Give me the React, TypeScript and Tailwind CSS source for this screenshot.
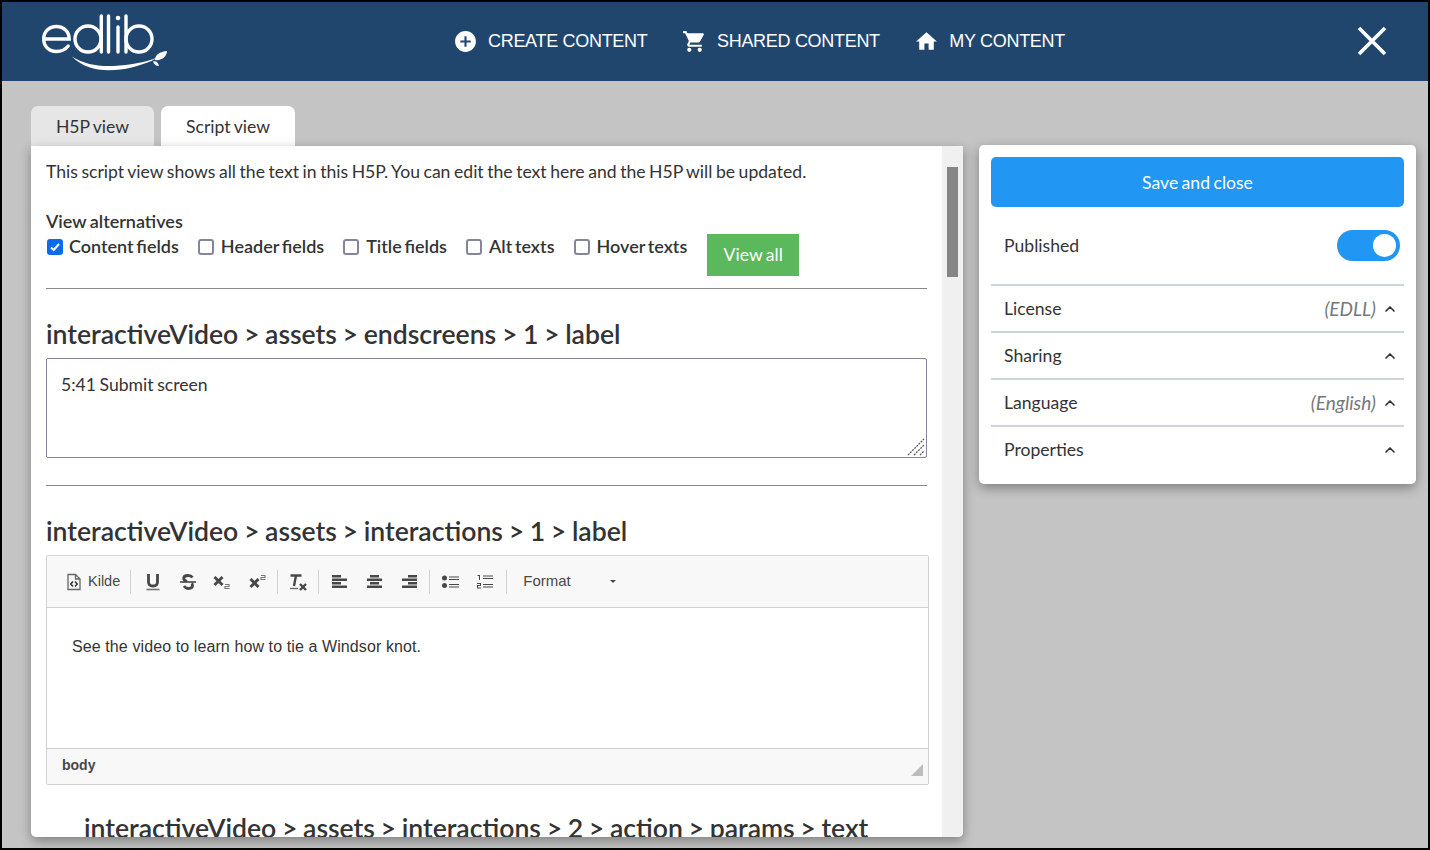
import { ChevronUp } from "lucide-react";
import { MdAddCircle, MdHome, MdShoppingCart } from "react-icons/md";

const filters = [
  { label: "Content fields", checked: true },
  { label: "Header fields", checked: false },
  { label: "Title fields", checked: false },
  { label: "Alt texts", checked: false },
  { label: "Hover texts", checked: false },
];

const accordions = [
  { label: "License", value: "(EDLL)" },
  { label: "Sharing" },
  { label: "Language", value: "(English)" },
  { label: "Properties" },
];

const Logo = () => (
  <svg width="128" height="60" viewBox="0 0 128 60" fill="none" stroke="#fff" strokeLinecap="round">
    <path strokeWidth="3.400" d="M2.700 28h25.500c0-7.500-5.500-12.500-12.800-12.500S2.700 20.500 2.700 28 8 40.500 15.400 40.500c5 0 9-2 11.800-5.500" />
    <circle cx="47" cy="28" r="13" strokeWidth="3.400" />
    <path strokeWidth="3.400" d="M60.300 5v36M67.500 5v36M77 16v25M85 5v36" />
    <circle cx="77" cy="7" r="2.300" fill="#fff" stroke="none" />
    <circle cx="98" cy="28" r="13" strokeWidth="3.400" />
    <path fill="#fff" stroke="none" d="M31 45.500c11 7 23 9.500 36 9.500 16 0 31-2.500 44-6.500l.5 1c-13 5.500-28 9.800-44 9.800-14 0-27-4-36.500-13.800z" />
    <path stroke="#fff" strokeWidth=".8" d="M110 49.500 122 44" />
    <path fill="#fff" stroke="none" d="M114 49c0-5 5-8.500 12-9 0 5-5 10-12 9zM112 50.500c3-1 5 .5 6 4.500-3 0-5-1.500-6-4.500z" />
  </svg>
);

const NavItem = ({ icon, label, gap }: { icon: React.ReactNode; label: string; gap: string }) => (
  <a className={`flex items-center ${gap} text-white text-[18px] tracking-[-0.3px] font-['Liberation_Sans',sans-serif]`}>
    {icon}
    <span>{label}</span>
  </a>
);

const Sep = () => <span className="w-px h-[24px] bg-[#d1d1d1] shrink-0" />;

const EditorIcons = {
  source: (
    <svg width="16" height="18" viewBox="0 0 16 18" fill="none" stroke="#666" strokeWidth="1.300">
      <path d="M2 1.500h7.500l4.500 4.500v10.500H2z" />
      <path d="M9.500 1.500V6H14" />
      <path d="M7 8.500 4.800 11 7 13.500M9 8.500l2.200 2.500L9 13.500" stroke="#333" strokeWidth="1.500" />
    </svg>
  ),
  underline: (
    <svg width="16" height="18" viewBox="0 0 16 18" fill="none" stroke="#474747">
      <path strokeWidth="2.800" d="M3.500 1v8c0 2.700 1.800 4 4.500 4s4.500-1.300 4.500-4V1" />
      <path strokeWidth="1.600" d="M1.500 16.500h13" opacity=".75" />
    </svg>
  ),
  strike: (
    <svg width="16" height="16" viewBox="0 0 16 16" fill="none" stroke="#474747">
      <path strokeWidth="2.800" d="M12.500 3.500C11.500 2 10 1.500 8 1.500c-2.500 0-4.300 1.200-4.300 3 0 1.600 1.300 2.300 3.300 3M4 12c1 1.500 2.500 2.500 4.500 2.500 2.500 0 4-1.200 4-3 0-.8-.3-1.500-1-2" />
      <path strokeWidth="1.600" d="M0 8h16" />
    </svg>
  ),
  sub: (
    <svg width="18" height="14" viewBox="0 0 18 14" fill="none" stroke="#474747">
      <path strokeWidth="2.900" d="m1.500 2 8 8M9.500 2l-8 8" />
      <path strokeWidth="1.100" stroke="#777" d="M12 9.500h4v2h-4v2h4.500" />
    </svg>
  ),
  sup: (
    <svg width="18" height="14" viewBox="0 0 18 14" fill="none" stroke="#474747">
      <path strokeWidth="2.900" d="m1.500 4 8 8M9.500 4l-8 8" />
      <path strokeWidth="1.100" stroke="#777" d="M12 .5h4v2h-4v2h4.500" />
    </svg>
  ),
  clear: (
    <svg width="18" height="18" viewBox="0 0 18 18" fill="none" stroke="#474747">
      <path strokeWidth="2.400" d="M1.500 2.500h11M7 2.500 5 13" />
      <path strokeWidth="1.400" d="M1 15.500h8" opacity=".8" />
      <path strokeWidth="2.400" d="m11 11 6 6M17 11l-6 6" />
    </svg>
  ),
};

const AlignIcon = ({ rows }: { rows: [number, number][] }) => (
  <svg width="16" height="14" viewBox="0 0 16 14" fill="#474747">
    {rows.map(([x, w], i) => (
      <rect key={i} x={x} y={i * 3.5} width={w} height="2.500" />
    ))}
  </svg>
);

const BulletIcon = () => (
  <svg width="18" height="14" viewBox="0 0 18 14" fill="#474747">
    <circle cx="2.500" cy="3" r="2.500" />
    <circle cx="2.500" cy="10.500" r="2.500" />
    <path d="M7 1.500h10v1H7zM7 4h10v1H7zM7 9h10v1H7zM7 11.500h10v1H7z" />
  </svg>
);

const NumberIcon = () => (
  <svg width="18" height="16" viewBox="0 0 18 16" fill="#474747">
    <path d="M7 1.500h10v1H7zM7 4h10v1H7zM7 10h10v1H7zM7 12.500h10v1H7z" />
    <path d="M1.500 1H4v5H3V2H1.500zM1 9h4v3H2v1.500h3v1H1V11h3V10H1z" />
  </svg>
);

export default function App() {
  return (
    <div className="w-[1430px] h-[850px] overflow-hidden border-2 border-black bg-[#c4c4c4] flex flex-col font-['Lato',sans-serif] text-[#333]">
      {/* top bar */}
      <header className="h-[79px] shrink-0 bg-[#21466d] flex items-center pl-[39px] pr-[41px]">
        <div className="w-[128px] h-[60px] mt-[-2px]">
          <Logo />
        </div>
        <nav className="ml-[284px] flex items-center gap-[34.5px]">
          <NavItem gap="gap-[10px]" label="CREATE CONTENT" icon={<MdAddCircle className="w-[25px] h-[25px]" />} />
          <NavItem gap="gap-[10px]" label="SHARED CONTENT" icon={<MdShoppingCart className="w-[25px] h-[25px]" />} />
          <NavItem gap="gap-[10px]" label="MY CONTENT" icon={<MdHome className="w-[25px] h-[25px]" />} />
        </nav>
        <button className="ml-auto text-white mt-[-2px]">
          <svg width="30" height="30" viewBox="0 0 30 30" stroke="#fff" strokeWidth="3.600">
            <path d="M2 2l26 26M28 2 2 28" />
          </svg>
        </button>
      </header>

      <div className="flex-1 min-h-0 flex pl-[29px] pr-[12px] pb-[11px] gap-[16px] [word-spacing:-0.06em]">
        {/* left column */}
        <div className="w-[932px] flex flex-col pt-[25px]">
          <div className="flex gap-[7px] h-[40px] shrink-0 text-[17.6px]">
            <div className="w-[123px] pt-[2px] rounded-t-[7px] bg-[#e6e6e6] flex items-center justify-center">H5P view</div>
            <div className="w-[134px] pt-[2px] rounded-t-[7px] bg-white flex items-center justify-center">Script view</div>
          </div>
          <div className="flex-1 min-h-0 flex bg-white rounded-b-[5px] overflow-hidden shadow-[0_4px_12px_rgba(0,0,0,0.35)]">
            <div className="w-[911px] pl-[15px] pr-[15px] overflow-hidden">
              <p className="text-[17.6px] leading-[22px] mt-[15px]">
                This script view shows all the text in this H5P. You can edit the text here and the H5P will be updated.
              </p>
              <div className="text-[18px] leading-[22px] font-semibold mt-[27px]">View alternatives</div>
              <div className="flex items-start mt-[2px] h-[42px]">
                {filters.map((f) => (
                  <label key={f.label} className="flex items-center h-[24px] mr-[19px] text-[18px] font-semibold [word-spacing:-0.1em]">
                    {f.checked ? (
                      <span className="w-[16px] h-[16px] mt-[2px] ml-px mr-[6px] rounded-[3px] bg-[#0b6cf0] flex items-center justify-center">
                        <svg width="12" height="12" viewBox="0 0 12 12" fill="none" stroke="#fff" strokeWidth="2">
                          <path d="m2 6.500 2.700 2.500L10 3" />
                        </svg>
                      </span>
                    ) : (
                      <span className="w-[16px] h-[16px] mt-[2px] mr-[7px] rounded-[3px] border-2 border-[#85859a] bg-white" />
                    )}
                    {f.label}
                  </label>
                ))}
                <button className="w-[92px] h-[42px] ml-px bg-[#5cb85c] text-white text-[17.6px] [word-spacing:-0.06em]">View all</button>
              </div>
              <hr className="border-[#8a8a8a] mt-[12px]" />

              <h2 className="text-[26.6px] leading-[32px] font-semibold mt-[29px]">interactiveVideo &gt; assets &gt; endscreens &gt; 1 &gt; label</h2>
              <div className="relative h-[100px] mt-[8px] border border-[#85859a] rounded-[2px] px-[14px] py-[15px] text-[17.6px] leading-[22px]">
                5:41 Submit screen
                <svg className="absolute right-[1px] bottom-[1px]" width="18" height="18" viewBox="0 0 18 18" stroke="#555" strokeWidth="1.300" strokeDasharray="2 1">
                  <path d="M1 17 17 1M7 17 17 7M13 17l4-4" />
                </svg>
              </div>
              <hr className="border-[#8a8a8a] mt-[27px]" />

              <h2 className="text-[26.6px] leading-[32px] font-semibold mt-[29px]">interactiveVideo &gt; assets &gt; interactions &gt; 1 &gt; label</h2>
              {/* rich text editor */}
              <div className="w-[883px] h-[230px] mt-[8px] border border-[#d1d1d1] rounded-[2px] flex flex-col font-['Liberation_Sans',sans-serif] [word-spacing:normal]">
                <div className="h-[52px] shrink-0 bg-[#f8f8f8] border-b border-[#d1d1d1] flex items-center pl-[19px] text-[#484848]">
                  <span className="flex items-center gap-[6px] mr-[10px] text-[14.500px]">{EditorIcons.source}Kilde</span>
                  <Sep />
                  <span className="ml-[14px] mr-[19px] flex">{EditorIcons.underline}</span>
                  <span className="mr-[17px] flex">{EditorIcons.strike}</span>
                  <span className="mr-[18px] flex">{EditorIcons.sub}</span>
                  <span className="mr-[10px] flex">{EditorIcons.sup}</span>
                  <Sep />
                  <span className="ml-[11px] mr-[11px] flex">{EditorIcons.clear}</span>
                  <Sep />
                  <span className="ml-[13px] mr-[19px] flex"><AlignIcon rows={[[0, 9], [0, 15], [0, 9], [0, 15]]} /></span>
                  <span className="mr-[19px] flex"><AlignIcon rows={[[3, 9], [0, 15], [3, 9], [0, 15]]} /></span>
                  <span className="mr-[11px] flex"><AlignIcon rows={[[6, 9], [0, 15], [6, 9], [0, 15]]} /></span>
                  <Sep />
                  <span className="ml-[12px] mr-[16px] flex"><BulletIcon /></span>
                  <span className="mr-[12px] flex"><NumberIcon /></span>
                  <Sep />
                  <span className="ml-[16px] w-[87px] text-[15px]">Format</span>
                  <span className="border-x-[3px] border-t-[3px] border-x-transparent border-t-[#484848]" />
                </div>
                <div className="flex-1 px-[25px] pt-[29px] text-[16px] leading-[20px] text-[#333] tracking-[0.1px]">
                  See the video to learn how to tie a Windsor knot.
                </div>
                <div className="relative h-[36px] shrink-0 bg-[#f8f8f8] border-t border-[#d1d1d1] flex items-center pl-[15px] pb-[2px] text-[14px] font-bold text-[#484848]">
                  body
                  <span className="absolute right-[5px] bottom-[8px] w-0 h-0 border-l-[12px] border-b-[12px] border-l-transparent border-b-[#bdbdbd]" />
                </div>
              </div>

              <h2 className="text-[26.6px] leading-[32px] font-semibold mt-[27px] ml-[38px] whitespace-nowrap">interactiveVideo &gt; assets &gt; interactions &gt; 2 &gt; action &gt; params &gt; text</h2>
            </div>
            {/* scrollbar */}
            <div className="w-[21px] shrink-0 bg-[#f0f0f0] pt-[21px] px-[5px]">
              <div className="h-[110px] bg-[#858585]" />
            </div>
          </div>
        </div>

        {/* right panel */}
        <aside className="w-[437px] h-[339px] mt-[64px] bg-white rounded-[5px] px-[12px] pt-[12px] shadow-[0_4px_12px_rgba(0,0,0,0.35)] text-[17.6px]">
          <button className="w-full h-[50px] pt-[2px] rounded-[5px] bg-[#2196f3] text-white [word-spacing:-0.06em]">Save and close</button>
          <div className="h-[77px] flex items-center justify-between pl-[13px] pr-[4px]">
            <span className="mt-[2px]">Published</span>
            <span className="w-[63px] h-[31px] rounded-full bg-[#2196f3] flex items-center justify-end pr-[4px]">
              <span className="w-[23px] h-[23px] rounded-full bg-white" />
            </span>
          </div>
          {accordions.map((a) => (
            <div key={a.label} className="h-[47px] border-t-2 border-[#ced4da] flex items-center pl-[13px] pr-[6px]">
              <span className="mt-[2px]">{a.label}</span>
              {a.value && <span className="ml-auto mt-[2px] italic text-[19px] text-[#777]">{a.value}</span>}
              <ChevronUp className={`w-[16px] h-[16px] text-[#333] ${a.value ? "ml-[6px]" : "ml-auto"}`} strokeWidth={2.500} />
            </div>
          ))}
        </aside>
      </div>
    </div>
  );
}
